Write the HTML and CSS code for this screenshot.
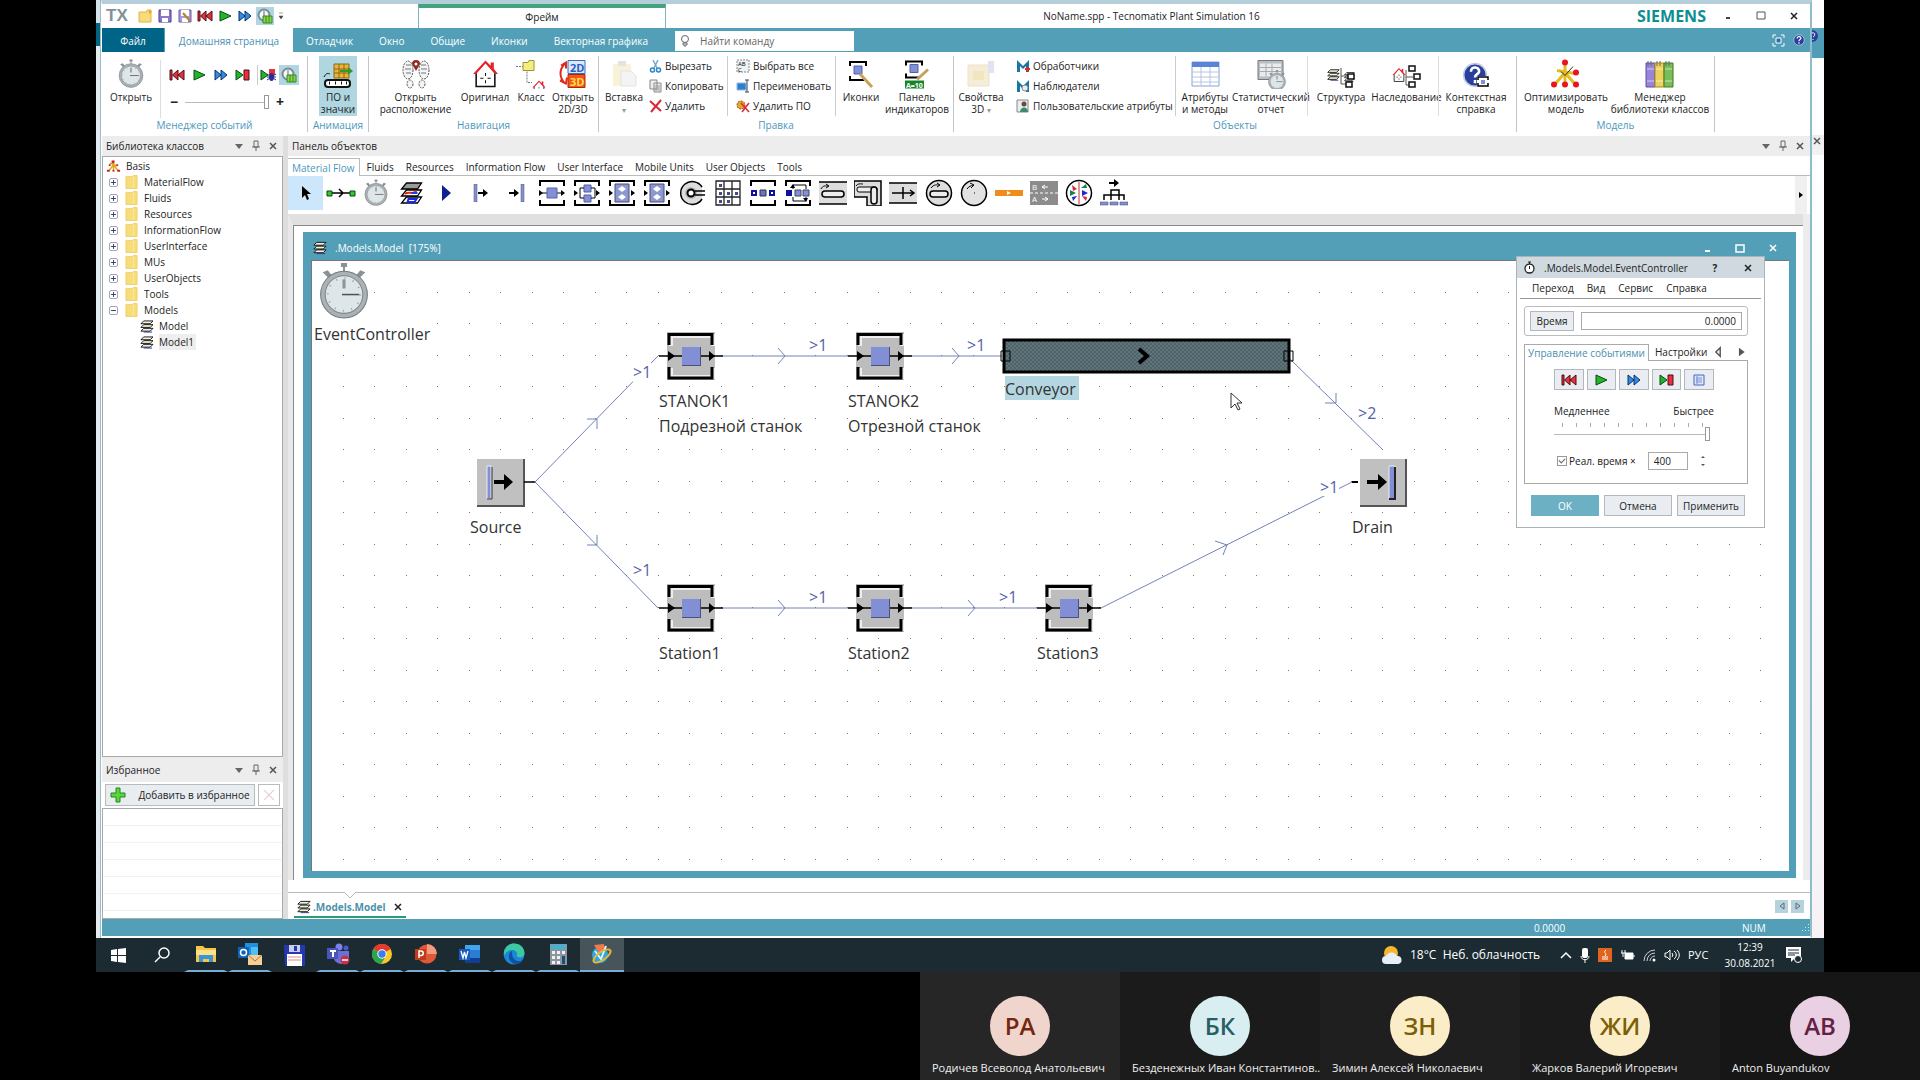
FILE: index.html
```html
<!DOCTYPE html>
<html lang="ru">
<head>
  <meta charset="UTF-8">
  <title>NoName.spp - Tecnomatix Plant Simulation 16</title>
  <link rel="stylesheet" href="styles.css">
</head>
<body>

  <!-- Shared icons -->
  <svg class="defs" width="0" height="0" aria-hidden="true">
    <defs>
      <symbol id="i-rewind" viewBox="0 0 16 12"><path d="M1 1h2v10H1zM9 1v10L3.500 6zM15 1v10L9 6z" fill="#e8303c" stroke="#4a1016"/></symbol>
      <symbol id="i-play" viewBox="0 0 16 12"><path d="M3 1l11 5L3 11z" fill="#22b52c" stroke="#0a4a12"/></symbol>
      <symbol id="i-fast" viewBox="0 0 16 12"><path d="M2 1l6 5-6 5zM8 1l6 5-6 5z" fill="#2f8de8" stroke="#0c2c66"/></symbol>
      <symbol id="i-step" viewBox="0 0 16 12"><path d="M1 1l7 5-7 5z" fill="#22b52c" stroke="#0a4a12"/><path d="M9 1h5v10H9z" fill="#e8303c" stroke="#4a1016"/></symbol>
      <symbol id="i-debug" viewBox="0 0 16 14"><path d="M1 2l7 5-7 5z" fill="#22b52c" stroke="#0a4a12"/><path d="M9 1h6v6H9z" fill="#e8303c"/><ellipse cx="11.500" cy="9" rx="2.500" ry="4" fill="#2b2f8f"/><path d="M7 6l9 6M16 6l-9 6M7 9h9" stroke="#2b2f8f"/></symbol>
      <symbol id="i-real" viewBox="0 0 16 16"><circle cx="7" cy="7" r="5.500" fill="#f4f8fa" stroke="#7d8a94" stroke-width="2"/><path d="M7 3v5" stroke="#667"/><path d="M6 8h9v7H6z" fill="#8fd44a" stroke="#2f8a1d"/><path d="M9 8v7M12 8v7" stroke="#2f8a1d"/></symbol>
      <symbol id="i-watch" viewBox="0 0 48 58">
        <path d="M21 1h6v4h-2v4h-2V5h-2z" fill="#8b9296"/><path d="M3 10l5-2 4 5-3 3zM45 10l-5-2-4 5 3 3z" fill="#8b9296"/>
        <circle cx="24" cy="32" r="23" fill="#aab2b6" stroke="#737a7e"/><circle cx="24" cy="32" r="18.500" fill="#dfe6e9" stroke="#7e868a"/>
        <circle cx="24" cy="32" r="16" fill="none" stroke="#9aa3a8" stroke-width="2" stroke-dasharray="1 7.380"/>
        <path d="M24 17v9" stroke="#8c9599" stroke-width="3"/><path d="M22 32h17" stroke="#4d5356" stroke-width="1.500"/>
      </symbol>
      <symbol id="i-frame" viewBox="0 0 24 24">
        <path d="M7 2h15l-4 6H2z" fill="#9a9a9a" stroke="#000" stroke-width="1.300"/>
        <path d="M7 9h15l-4 6H2z" fill="#fff" stroke="#000" stroke-width="1.300"/><path d="M5 13c5-3 8 1 12-3" fill="none" stroke="#e02a1e" stroke-width="2"/><path d="M12 12h6" stroke="#1e3ee0" stroke-width="2"/>
        <path d="M7 16h15l-4 6H2z" fill="#fff" stroke="#000" stroke-width="1.300"/><path d="M9 18h8l-2 3H8z" fill="none" stroke="#1c28e8" stroke-width="2"/>
      </symbol>
      <symbol id="i-layers" viewBox="0 0 16 14"><path d="M5 1h10l-3 3H2zM5 5h10l-3 3H2zM5 9h10l-3 3H2z" fill="#f4f1dc" stroke="#111"/><path d="M5 13h9" stroke="#30308f"/></symbol>
      <symbol id="i-brackets" viewBox="0 0 26 26"><path d="M1 6V1h24v5M1 20v5h24v-5" fill="none" stroke="#000" stroke-width="2"/></symbol>
      <symbol id="i-arrows" viewBox="0 0 26 26"><path d="M0 10l4 3-4 3zM22 10l4 3-4 3z"/></symbol>
      <symbol id="i-station" viewBox="0 0 26 26"><use href="#i-brackets"/><use href="#i-arrows"/><path d="M3 13h5M18 13h5" stroke="#000"/><path d="M8 8h10v10H8z" fill="#8290d6" stroke="#5560a8"/></symbol>
      <symbol id="i-bay" viewBox="0 0 26 26"><use href="#i-brackets"/><use href="#i-arrows"/><path d="M6 4h14v18H6z" fill="#8d97d0" stroke="#444c80"/><path d="M9 9l4-3v6zM17 9l-4-3v6zM9 17l4-3v6zM17 17l-4-3v6z" fill="#fff"/></symbol>
      <symbol id="i-house" viewBox="0 0 26 28"><path d="M4 13v13h18V13" fill="#fff" stroke="#111" stroke-width="1.500"/><path d="M18 3h3v6l4 5H22L13 4 4 14H1L13 1l5 5z" fill="#e8202a"/><path d="M13 13v3M13 20v3M8 18h3M15 18h3" stroke="#111"/></symbol>
      <symbol id="i-pin" viewBox="0 0 10 12"><path d="M3 1h4v6H3zM1 7h8M5 7v4" fill="none" stroke="#666"/></symbol>
      <symbol id="i-close" viewBox="0 0 10 10"><path d="M2 2l6 6M8 2L2 8" stroke="currentColor" stroke-width="1.500"/></symbol>
      <symbol id="i-caret" viewBox="0 0 10 10"><path d="M1 3h8L5 8z" fill="#666"/></symbol>
      <symbol id="i-m" viewBox="0 0 14 14"><path d="M1 13V1l6 6 6-6v12h-3V7l-3 3-3-3v6z" fill="#1477a8"/></symbol>
      <symbol id="i-help" viewBox="0 0 16 16"><circle cx="8" cy="8" r="7" fill="#2a3f9c" stroke="#c5cce4"/><path d="M5.500 6c0-4 5.500-3 5 0-.3 1.600-2.500 1.500-2.500 3.500M8 11v2" fill="none" stroke="#fff" stroke-width="1.600"/></symbol>
      <symbol id="i-tree" viewBox="0 0 16 14"><path d="M8 1v5L3 12M8 6l5 6M8 6v6M4 4l8 3" fill="none" stroke="#d9a51c" stroke-width="1.500"/><path d="M6 1h3v3H6zM1 11h3v2H1zM12 11h3v2h-3zM7 11h2v2H7zM3 5h2v2H3zM11 5h2v2h-2z" fill="#c8281e"/></symbol>
      <symbol id="i-folder" viewBox="0 0 14 16"><path d="M1 2h8v-1h4v14H1z" fill="#f7dc7a" stroke="#f0cf68"/><path d="M9 2v13" stroke="#fbe9a6"/></symbol>

      <!-- Diagram parts, origin in the middle -->
      <g id="n-station">
        <path d="M-24-24h48v48h-48z" fill="#bdbdbd"/>
        <path d="M-20-10v-10h42v10M-20 12v9h42v-9" fill="none" stroke="#eee" stroke-width="4"/>
        <path d="M-22-11v-10.500h43V-11M-22 11v11h43V11" fill="none" stroke="#000" stroke-width="3"/>
        <path d="M-32 0h50M8 0h24" stroke="#000" stroke-width="1.500"/>
        <path d="M-23-5l7 5-7 5zM18-5l6 5-6 5z"/>
        <path d="M-9-9h19v19H-9z" fill="#4a5280"/><path d="M-9-9h18V9H-9z" fill="#828fd4"/>
      </g>
      <pattern id="dots" width="63" height="63" patternUnits="userSpaceOnUse" x="0" y="0">
        <path d="M31 31h1v1h-1zM62 31h1v1h-1zM31 62h1v1h-1zM62 62h1v1h-1z" fill="#777"/>
      </pattern>
      <pattern id="mesh" width="4" height="4" patternUnits="userSpaceOnUse"><path d="M0 0h4v4H0z" fill="#5f757b"/><path d="M0 0h2v2H0zM2 2h2v2H2z" fill="#4e6268"/></pattern>
    </defs>
  </svg>

  <div class="screen">
    <div class="behind-left"></div>

    <div class="app">
      <!-- Title bar -->
      <header class="titlebar">
        <div class="quick">
          <b class="tx">TX</b>
          <button aria-label="Создать"><svg width="15" height="14" viewBox="0 0 15 14"><path d="M1 3h8V1h4v12H1z" fill="#f7dc7a" stroke="#dcb448"/><path d="M11 1l3 2-3 2" fill="#f0a020"/></svg></button>
          <button aria-label="Сохранить"><svg width="14" height="14" viewBox="0 0 14 14"><path d="M1 1h12v12H1z" fill="#8a78c8" stroke="#4c3d94"/><path d="M3 1h8v6H3zM4 9h6v4H4z" fill="#fff"/></svg></button>
          <button aria-label="Сохранить как"><svg width="14" height="14" viewBox="0 0 14 14"><path d="M1 1h12v12H1z" fill="#a89cd4" stroke="#6a5ea8"/><path d="M3 1h8v6H3zM4 9h6v4H4z" fill="#fff"/><path d="M5 4l7 8" stroke="#b8842c" stroke-width="2"/></svg></button>
          <button aria-label="Сброс"><svg width="16" height="12"><use href="#i-rewind"/></svg></button>
          <button aria-label="Старт"><svg width="16" height="12"><use href="#i-play"/></svg></button>
          <button aria-label="Быстро"><svg width="16" height="12"><use href="#i-fast"/></svg></button>
          <button class="on" aria-label="Реальное время"><svg width="16" height="16"><use href="#i-real"/></svg></button>
          <svg class="quick-more" width="6" height="8" viewBox="0 0 6 8"><path d="M1 1h4M1 4h4L3 7z" fill="#444" stroke="#444" stroke-width=".5"/></svg>
        </div>
        <div class="context-tab">Фрейм</div>
        <div class="window-title">NoName.spp - Tecnomatix Plant Simulation 16</div>
        <b class="siemens">SIEMENS</b>
        <div class="window-buttons">
          <button aria-label="Свернуть"><svg width="10" height="10"><path d="M3 7h4" stroke="#444" stroke-width="2"/></svg></button>
          <button aria-label="Развернуть"><svg width="10" height="10"><path d="M1 1h8v7H1z" fill="none" stroke="#555"/></svg></button>
          <button aria-label="Закрыть"><svg width="10" height="10"><use href="#i-close"/></svg></button>
        </div>
      </header>

      <!-- Ribbon tabs -->
      <nav class="tabs">
        <button class="file">Файл</button>
        <button class="active">Домашняя страница</button>
        <button>Отладчик</button>
        <button>Окно</button>
        <button>Общие</button>
        <button>Иконки</button>
        <button>Векторная графика</button>
        <label class="search">
          <svg width="10" height="14" viewBox="0 0 10 14"><circle cx="5" cy="5" r="3.500" fill="none" stroke="#666"/><path d="M3 9h4v2H3zM4 12h2" fill="none" stroke="#666"/></svg>
          <input type="text" placeholder="Найти команду" aria-label="Найти команду">
        </label>
        <div class="tabs-right">
          <button aria-label="Полный экран"><svg width="13" height="13" viewBox="0 0 13 13"><path d="M1 4V1h3M9 1h3v3M12 9v3H9M4 12H1V9" fill="none" stroke="#fff"/><path d="M4 4h5v5H4z" fill="#2c6db0" stroke="#fff"/></svg></button>
          <button aria-label="Справка"><svg width="12" height="14" viewBox="0 0 16 16"><use href="#i-help"/></svg></button>
        </div>
      </nav>

      <!-- Ribbon -->
      <div class="ribbon">
        <section class="group events">
          <div class="tools">
            <button class="big"><svg width="26" height="30"><use href="#i-watch"/></svg><span>Открыть</span></button>
            <div class="controller">
              <div class="row">
                <button aria-label="Сброс"><svg width="16" height="12"><use href="#i-rewind"/></svg></button>
                <button aria-label="Старт"><svg width="16" height="12"><use href="#i-play"/></svg></button>
                <button aria-label="Быстро"><svg width="16" height="12"><use href="#i-fast"/></svg></button>
                <button aria-label="Шаг"><svg width="16" height="12"><use href="#i-step"/></svg></button>
                <button class="bug" aria-label="Отладка"><svg width="16" height="14"><use href="#i-debug"/></svg></button>
                <button class="on" aria-label="Реальное время"><svg width="16" height="16"><use href="#i-real"/></svg></button>
              </div>
              <div class="row speed">
                <b>−</b><input type="range" min="0" max="100" value="100" aria-label="Скорость"><b>+</b>
              </div>
            </div>
          </div>
          <h3>Менеджер событий</h3>
        </section>

        <section class="group animation">
          <div class="tools">
            <button class="big on">
              <svg width="30" height="28" viewBox="0 0 30 28"><path d="M11 4h15v14H11z" fill="#eab33c" stroke="#8a6a12"/><path d="M11 9h15M11 13h15M16 4v14M21 4v14" stroke="#8a6a12"/><path d="M17 10h8V7l5 4-5 4v-3h-8z" fill="#2f9a2a"/><rect x="2" y="20" width="25" height="7" rx="3" fill="#fff" stroke="#111" stroke-width="2"/><path d="M1 17c2-4 4-4 6-3" fill="none" stroke="#111"/><path d="M6 23h1M12 23h1M18 23h1M23 23h1" stroke="#111" stroke-width="3"/></svg>
              <span>ПО и<br>значки</span>
            </button>
          </div>
          <h3>Анимация</h3>
        </section>

        <section class="group navigation">
          <div class="tools">
            <button class="big">
              <svg width="28" height="30" viewBox="0 0 28 30"><g fill="#f4f4f4" stroke="#555" stroke-dasharray="2 1"><ellipse cx="6" cy="11" rx="5" ry="9"/><ellipse cx="22" cy="11" rx="5" ry="9"/><ellipse cx="8" cy="25" rx="3" ry="4"/><ellipse cx="20" cy="25" rx="3" ry="4"/></g><path d="M4 6h5M3 10h6M4 14h5M19 6h5M19 10h6M19 14h5" stroke="#777"/><path d="M14 12l-4-7a4 4 0 1 1 8 0z" fill="#8d2a1c"/><circle cx="14" cy="5" r="1.500" fill="#fff"/></svg>
              <span>Открыть<br>расположение</span>
            </button>
            <button class="big"><svg width="27" height="29"><use href="#i-house"/></svg><span>Оригинал</span></button>
            <button class="big"><svg width="30" height="29" viewBox="0 0 30 29"><path d="M0 7h7M11 12v11h5" fill="none" stroke="#777" stroke-dasharray="2 1"/><path d="M7 3h5l1-2h5v10H7z" fill="#f4ee7c" stroke="#9a9440"/><svg x="16" y="13" width="14" height="15"><use href="#i-house"/></svg></svg><span>Класс</span></button>
            <button class="big"><svg width="28" height="29" viewBox="0 0 28 29"><path d="M9 1h17v13H9z" fill="#dbe8fa" stroke="#3a6cc0"/><path d="M9 15h17v13H9z" fill="#f4561e" stroke="#a82c0c"/><text x="11" y="12" font-size="11" font-weight="bold" fill="#2a5fc4">2D</text><text x="11" y="26" font-size="11" font-weight="bold" fill="#ffe14a">3D</text><path d="M6 4c-6 6-6 14 0 20M2 6l5-3 0 6M1 21l6 3 1-6" fill="none" stroke="#e02a1e" stroke-width="2"/></svg><span>Открыть<br>2D/3D</span></button>
          </div>
          <h3>Навигация</h3>
        </section>

        <section class="group edit">
          <div class="tools">
            <button class="big off"><svg width="26" height="28" viewBox="0 0 26 28"><path d="M2 4h18v22H2z" fill="#f6efcf"/><path d="M7 1h8v5H7z" fill="#ddd"/><path d="M10 11h10l5 5v10H10z" fill="#f2f2f2" stroke="#ddd"/></svg><span>Вставка<br><small>▾</small></span></button>
            <div class="list">
              <button><svg width="13" height="14" viewBox="0 0 13 14"><path d="M4 1l4 8M9 1L5 9" stroke="#7aa5c8" stroke-width="1.500"/><circle cx="3.500" cy="11" r="2" fill="none" stroke="#2a86c4" stroke-width="1.500"/><circle cx="9.500" cy="11" r="2" fill="none" stroke="#2a86c4" stroke-width="1.500"/></svg>Вырезать</button>
              <button><svg width="13" height="14" viewBox="0 0 13 14"><path d="M1 1h7v9H1zM5 4h7v9H5z" fill="#eee" stroke="#888"/><path d="M6 7h5M6 9h5M6 11h5" stroke="#999"/></svg>Копировать</button>
              <button><svg width="13" height="14" viewBox="0 0 13 14"><path d="M1 2l11 10M12 1L2 13" stroke="#d8283a" stroke-width="2"/></svg>Удалить</button>
            </div>
            <div class="list split">
              <button><svg width="14" height="14" viewBox="0 0 14 14"><path d="M1 1h12v12H1z" fill="#eef3f6" stroke="#888" stroke-dasharray="2 1"/><text x="2" y="7" font-size="6">AB</text><text x="2" y="13" font-size="6">C</text></svg>Выбрать все</button>
              <button><svg width="14" height="14" viewBox="0 0 14 14"><path d="M1 4h9v7H1z" fill="#2a7fd4" stroke="#9ab8d8"/><path d="M9 1h4M11 1v12M9 13h4" stroke="#345"/></svg>Переименовать</button>
              <button><svg width="14" height="14" viewBox="0 0 14 14"><circle cx="5" cy="6" r="4" fill="#e8a42c" stroke="#8a5a10" stroke-dasharray="2 1"/><path d="M5 4l8 9M13 4l-7 9" stroke="#d8283a" stroke-width="1.500"/></svg>Удалить ПО</button>
            </div>
            <button class="big"><svg width="26" height="28" viewBox="0 0 26 28"><path d="M2 6V2h16v4M2 16v4h14" fill="none" stroke="#000" stroke-width="2"/><path d="M6 6h8v8H6z" fill="#8290d6" stroke="#5560a8"/><path d="M12 14l12 13" stroke="#c8a05a" stroke-width="3"/></svg><span>Иконки</span></button>
            <button class="big"><svg width="26" height="29" viewBox="0 0 26 29"><path d="M2 6V2h16v4M2 14v4h14" fill="none" stroke="#000" stroke-width="2"/><path d="M6 5h8v8H6z" fill="#8290d6" stroke="#5560a8"/><path d="M24 10L13 20" stroke="#c8a05a" stroke-width="3"/><path d="M1 21h19v8H1z" fill="#17842a"/><text x="2" y="28" font-size="7" font-weight="bold" fill="#fff">A=10</text></svg><span>Панель<br>индикаторов</span></button>
          </div>
          <h3>Правка</h3>
        </section>

        <section class="group objects">
          <div class="tools">
            <button class="big off"><svg width="30" height="28" viewBox="0 0 30 28"><path d="M2 5h21v21H2z" fill="#f4e9d0" stroke="#eadcb8"/><path d="M7 11h11v9H7z" fill="#eee0b0"/><path d="M22 1h6v12h-6z" fill="#dcdcf0"/></svg><span>Свойства<br>3D <small>▾</small></span></button>
            <div class="list split">
              <button><svg width="14" height="14" viewBox="0 0 14 14"><use href="#i-m"/><path d="M9 10h5M11.500 8v5" stroke="#e02a1e" stroke-width="2"/></svg>Обработчики</button>
              <button><svg width="14" height="14" viewBox="0 0 14 14"><use href="#i-m"/><circle cx="9" cy="9" r="3" fill="#e4ecf2" stroke="#888"/></svg>Наблюдатели</button>
              <button><svg width="14" height="14" viewBox="0 0 14 14"><path d="M1 1h11v12H1z" fill="#e6eef0" stroke="#888"/><circle cx="8" cy="5" r="2.500" fill="#6a4a38"/><path d="M4 13c0-6 8-6 8 0z" fill="#3f8a6a"/></svg>Пользовательские атрибуты</button>
            </div>
            <button class="big"><svg width="29" height="26" viewBox="0 0 29 26"><path d="M1 1h27v24H1z" fill="#fff" stroke="#8aa2d0"/><path d="M1 1h27v5H1z" fill="#5b84d8"/><path d="M1 11h27M1 16h27M1 21h27M10 6v19M19 6v19" stroke="#b4c4e8"/></svg><span>Атрибуты<br>и методы</span></button>
            <button class="big"><svg width="29" height="29" viewBox="0 0 29 29"><path d="M1 1h25v19H1z" fill="#b8bec4" stroke="#777"/><path d="M3 4h21v13H3z" fill="#e8ecee"/><path d="M3 8h21M3 12h21M9 4v13M15 4v13" stroke="#aaa"/><svg x="11" y="6" width="18" height="22"><use href="#i-watch"/></svg></svg><span>Статистический<br>отчет</span></button>
            <button class="big rule"><svg width="30" height="28" viewBox="0 0 30 28"><svg x="0" y="0" width="14" height="13"><use href="#i-layers"/></svg><svg x="17" y="2" width="12" height="11"><use href="#i-layers"/></svg><path d="M15 8v16h5M15 16h7" fill="none" stroke="#555"/><path d="M22 14h6v5h-6zM20 22h6v5h-6z" fill="#fff" stroke="#111" stroke-width="1.500"/></svg><span>Структура</span></button>
            <button class="big"><svg width="30" height="28" viewBox="0 0 30 28"><svg x="0" y="0" width="14" height="15"><use href="#i-house"/></svg><path d="M14 10v15h4M14 17h7" fill="none" stroke="#555"/><path d="M17 6h6v5h-6zM22 14h6v5h-6zM17 22h6v5h-6z" fill="#fff" stroke="#111" stroke-width="1.500"/></svg><span>Наследование</span></button>
            <button class="big rule"><svg width="28" height="28" viewBox="0 0 28 28"><svg x="0" y="0" width="26" height="26"><use href="#i-help"/></svg><path d="M15 16h12v11H15z" fill="#fff"/><path d="M16 20v-3h10v3M16 23v3h10v-3" fill="none" stroke="#000" stroke-width="1.500"/><path d="M19 20h4v4h-4z" fill="#8290d6"/></svg><span>Контекстная<br>справка</span></button>
          </div>
          <h3>Объекты</h3>
        </section>

        <section class="group model">
          <div class="tools">
            <button class="big"><svg width="30" height="29" viewBox="0 0 30 29"><path d="M14 3v10L3 26M14 13l11 13M14 13v13M6 11l18 3" fill="none" stroke="#e4bc1e" stroke-width="3"/><path d="M22 7l-8 9-4-4" fill="none" stroke="#333"/><g fill="#e8141e"><circle cx="14" cy="3" r="3"/><circle cx="25" cy="13" r="3"/><circle cx="3" cy="25" r="3"/><circle cx="14" cy="25" r="3"/><circle cx="25" cy="25" r="3"/></g></svg><span>Оптимизировать<br>модель</span></button>
            <button class="big"><svg width="30" height="28" viewBox="0 0 30 28"><path d="M1 3h9v24H1z" fill="#9a84d8" stroke="#5f4ca8"/><path d="M10 3h9v24h-9z" fill="#ecd25a" stroke="#a88c1c"/><path d="M19 3h9v24h-9z" fill="#7cbc58" stroke="#3f7c24"/><path d="M3 1v5M6 1v5M12 1v5M15 1v5M21 1v5M24 1v5" stroke="#666"/><path d="M2 9h7M11 9h7M20 9h7M2 21h7M11 21h7M20 21h7" stroke="#fff" stroke-opacity=".6"/></svg><span>Менеджер<br>библиотеки классов</span></button>
          </div>
          <h3>Модель</h3>
        </section>
      </div>

      <div class="workspace">
        <!-- Class library and favourites -->
        <aside class="side">
          <div class="caption">Библиотека классов
            <span class="caption-icons"><svg width="10" height="10"><use href="#i-caret"/></svg><svg width="10" height="12"><use href="#i-pin"/></svg><svg width="10" height="10"><use href="#i-close"/></svg></span>
          </div>
          <ul class="tree">
            <li class="root"><svg width="15" height="14"><use href="#i-tree"/></svg>Basis</li>
            <li><i class="plus"></i><svg width="13" height="16"><use href="#i-folder"/></svg>MaterialFlow</li>
            <li><i class="plus"></i><svg width="13" height="16"><use href="#i-folder"/></svg>Fluids</li>
            <li><i class="plus"></i><svg width="13" height="16"><use href="#i-folder"/></svg>Resources</li>
            <li><i class="plus"></i><svg width="13" height="16"><use href="#i-folder"/></svg>InformationFlow</li>
            <li><i class="plus"></i><svg width="13" height="16"><use href="#i-folder"/></svg>UserInterface</li>
            <li><i class="plus"></i><svg width="13" height="16"><use href="#i-folder"/></svg>MUs</li>
            <li><i class="plus"></i><svg width="13" height="16"><use href="#i-folder"/></svg>UserObjects</li>
            <li><i class="plus"></i><svg width="13" height="16"><use href="#i-folder"/></svg>Tools</li>
            <li><i class="plus minus"></i><svg width="13" height="16"><use href="#i-folder"/></svg>Models</li>
            <li class="leaf"><svg width="15" height="13"><use href="#i-layers"/></svg>Model</li>
            <li class="leaf"><svg width="15" height="13"><use href="#i-layers"/></svg><span class="selected">Model1</span></li>
          </ul>
          <div class="caption">Избранное
            <span class="caption-icons"><svg width="10" height="10"><use href="#i-caret"/></svg><svg width="10" height="12"><use href="#i-pin"/></svg><svg width="10" height="10"><use href="#i-close"/></svg></span>
          </div>
          <div class="fav-bar">
            <button class="add"><svg width="16" height="16" viewBox="0 0 16 16"><path d="M6 1h4v5h5v4h-5v5H6v-5H1V6h5z" fill="#5fd43a" stroke="#1d8a1a"/></svg>Добавить в избранное</button>
            <button class="remove" aria-label="Удалить из избранного"><svg width="12" height="12" viewBox="0 0 10 10"><path d="M1 1l8 8M9 1L1 9" stroke="#e8cccc"/></svg></button>
          </div>
          <div class="fav-list"></div>
        </aside>

        <main class="content">
          <div class="caption">Панель объектов
            <span class="caption-icons"><svg width="10" height="10"><use href="#i-caret"/></svg><svg width="10" height="12"><use href="#i-pin"/></svg><svg width="10" height="10"><use href="#i-close"/></svg></span>
          </div>
          <div class="toolbox-tabs">
            <button class="active">Material Flow</button>
            <button>Fluids</button>
            <button>Resources</button>
            <button>Information Flow</button>
            <button>User Interface</button>
            <button>Mobile Units</button>
            <button>User Objects</button>
            <button>Tools</button>
          </div>
          <div class="toolbox">
            <div class="toolbox-items">
              <button class="on" aria-label="Выбор"><svg width="10" height="16" viewBox="0 0 10 16"><path d="M1 1v12l3-3 2 5 2-1-2-5h4z"/></svg></button>
              <button aria-label="Connector"><svg width="30" height="10" viewBox="0 0 30 10"><path d="M5 5h20M13 1l4 4-4 4" fill="none" stroke="#000" stroke-width="1.500"/><path d="M1 3h5v5H1zM24 3h5v5h-5z" fill="#35c435" stroke="#074a07"/></svg></button>
              <button aria-label="EventController"><svg width="24" height="28"><use href="#i-watch"/></svg></button>
              <button aria-label="Frame"><svg width="25" height="24"><use href="#i-frame"/></svg></button>
              <button aria-label="Interface"><svg width="10" height="16"><path d="M1 0l9 8-9 8z" fill="#10208f"/></svg></button>
              <button aria-label="Source"><svg width="16" height="18"><path d="M1 0h3v18H1z" fill="#8290d6" stroke="#556" stroke-width=".5"/><path d="M5 9h6" stroke="#000" stroke-width="2"/><path d="M10 5l5 4-5 4z"/></svg></button>
              <button aria-label="Drain"><svg width="16" height="18"><path d="M12 0h3v18h-3z" fill="#8290d6" stroke="#556" stroke-width=".5"/><path d="M0 9h6" stroke="#000" stroke-width="2"/><path d="M5 5l5 4-5 4z"/></svg></button>
              <button aria-label="Station"><svg width="26" height="26"><use href="#i-station"/></svg></button>
              <button aria-label="ParallelStation"><svg width="26" height="26" viewBox="0 0 26 26"><use href="#i-brackets"/><use href="#i-arrows"/><path d="M10 5h7v7h-7zM10 15h7v7h-7z" fill="#8290d6" stroke="#5560a8"/><path d="M10 8H6v10h4M17 8h4v10h-4" fill="none" stroke="#000"/></svg></button>
              <button aria-label="AssemblyStation"><svg width="26" height="26"><use href="#i-bay"/></svg></button>
              <button aria-label="DismantleStation"><svg width="26" height="26"><use href="#i-bay"/></svg></button>
              <button aria-label="PickAndPlace"><svg width="28" height="26" viewBox="0 0 28 26"><path d="M24 7A11.500 11.500 0 1 0 24 19" fill="#ddd" stroke="#000" stroke-width="1.500"/><circle cx="13" cy="13" r="6" fill="#bbb"/><circle cx="13" cy="13" r="3.500" fill="#fff" stroke="#000" stroke-width="2"/><path d="M17 11h10M17 15h10" stroke="#000" stroke-width="1.500"/></svg></button>
              <button aria-label="Store"><svg width="26" height="26" viewBox="0 0 26 26"><path d="M1 1h24v24H1zM9 1v24M17 1v24M1 9h24M1 17h24" fill="#fff" stroke="#222" stroke-width="1.300"/><path d="M4 4h3v3H4zM4 12h3v3H4zM12 12h3v3h-3zM20 12h3v3h-3zM4 20h3v3H4zM12 20h3v3h-3z" fill="#44498c"/></svg></button>
              <button aria-label="Buffer"><svg width="26" height="26" viewBox="0 0 26 26"><use href="#i-brackets"/><path d="M1 10h6v6H1zM19 10h6v6h-6z" fill="#0d12a0"/><path d="M10 10h6v6h-6z" fill="#6a74c0" stroke="#334"/><path d="M3 13h2M21 13h2" stroke="#fff" stroke-width="2"/></svg></button>
              <button aria-label="Sorter"><svg width="26" height="26" viewBox="0 0 26 26"><use href="#i-brackets"/><path d="M1 10h6v6H1z" fill="#0d12a0"/><path d="M10 10h6v6h-6zM18 10h6v6h-6z" fill="#8290d6" stroke="#446"/><path d="M8 9V5h13v4M8 17v4h13v-4" fill="none" stroke="#000"/><path d="M5 8h5L8 4zM18 18h5l-2 4z"/></svg></button>
              <button aria-label="Conveyor"><svg width="28" height="26" viewBox="0 0 28 26"><path d="M0 2h28v22H0z" fill="#ddd"/><path d="M0 2h28M0 24h28" stroke="#000" stroke-width="1.500"/><rect x="3" y="11" width="22" height="6" rx="3" fill="#eee" stroke="#000" stroke-width="1.500"/><path d="M2 9c2-4 5-3 7-3M7 4l3 2-3 2" fill="none" stroke="#000"/></svg></button>
              <button aria-label="AngularConverter"><svg width="28" height="26" viewBox="0 0 28 26"><path d="M0 1h27v25H13V17H0z" fill="#ddd" stroke="#000" stroke-width="1.500"/><rect x="3" y="7" width="20" height="5" rx="2" fill="#eee" stroke="#000"/><rect x="17" y="7" width="6" height="17" rx="3" fill="#eee" stroke="#000" stroke-width="1.500"/><path d="M2 6c2-3 5-2 7-2" fill="none" stroke="#000"/></svg></button>
              <button aria-label="Track"><svg width="28" height="26" viewBox="0 0 28 26"><path d="M0 3h28v20H0z" fill="#ddd"/><path d="M0 3h28M0 23h28M3 13h21M14 7v12M21 10l4 3-4 3" fill="none" stroke="#000" stroke-width="1.500"/></svg></button>
              <button aria-label="Turntable"><svg width="28" height="28" viewBox="0 0 28 28"><circle cx="14" cy="14" r="12.500" fill="#ddd" stroke="#000" stroke-width="1.500"/><rect x="5" y="12" width="18" height="6" rx="3" fill="#eee" stroke="#000" stroke-width="1.500"/><path d="M6 9c3-4 6-3 8-3M12 4l3 2-3 2" fill="none" stroke="#000"/></svg></button>
              <button aria-label="Turnplate"><svg width="28" height="28" viewBox="0 0 28 28"><circle cx="14" cy="14" r="12.500" fill="#e2e2e2" stroke="#000" stroke-width="1.500"/><path d="M7 10c2-3 4-3 6-4M10 4l4 2-3 3M14 14h1" fill="none" stroke="#000"/></svg></button>
              <button aria-label="TwoLaneTrack"><svg width="28" height="8"><path d="M0 1h28v6H0z" fill="#f08c1a"/><path d="M12 2l4 2-4 2z" fill="#fff"/></svg></button>
              <button aria-label="Lane"><svg width="28" height="26"><path d="M0 1h28v24H0z" fill="#8c8c8c"/><path d="M0 13h28" stroke="#fff" stroke-dasharray="3 2"/><path d="M12 7h6M15 5l-3 2 3 2M12 19h6M15 17l3 2-3 2" fill="none" stroke="#fff"/><text x="2" y="10" font-size="8" fill="#fff">B</text><text x="2" y="22" font-size="8" fill="#fff">A</text></svg></button>
              <button aria-label="FlowControl"><svg width="28" height="28" viewBox="0 0 28 28"><circle cx="14" cy="14" r="12.500" fill="#fff" stroke="#000" stroke-width="1.500"/><path d="M14 3v22" stroke="#c03030"/><path d="M7 6l5 4-4 2zM21 22l-4-5 5 1z" fill="#d8283a"/><path d="M5 11l6 3-6 3zM16 9l5-4 1 4z" fill="#18804a"/><path d="M17 11l6 3-6 3zM8 22l4-5-5 1z" fill="#1c28d8"/></svg></button>
              <button aria-label="Cycle"><svg width="28" height="28" viewBox="0 0 28 28"><path d="M9 4h6" stroke="#000" stroke-width="2"/><path d="M14 0l5 4-5 4z"/><path d="M4 21v-5h20v5M11 21V11h8v10" fill="none" stroke="#000" stroke-width="1.500"/><path d="M0 23h8v3H0zM10 23h8v3h-8zM20 23h8v3h-8z" fill="#8290d6" stroke="#446" stroke-width=".5"/></svg></button>
            </div>
            <button class="more" aria-label="Ещё"><svg width="4" height="6"><path d="M0 0l4 3-4 3z"/></svg></button>
          </div>

          <div class="mdi">
            <div class="frame-window">
              <div class="frame-title">
                <svg width="15" height="14"><use href="#i-layers"/></svg>
                <span>.Models.Model&nbsp; [175%]</span>
                <div class="frame-buttons">
                  <button aria-label="Свернуть"><svg width="10" height="10"><path d="M3 8h5" stroke="#fff" stroke-width="2"/></svg></button>
                  <button aria-label="Развернуть"><svg width="10" height="10"><path d="M1 2h8v7H1z" fill="none" stroke="#fff" stroke-width="1.500"/></svg></button>
                  <button aria-label="Закрыть"><svg width="10" height="10"><use href="#i-close"/></svg></button>
                </div>
              </div>
              <div class="canvas">
                <svg class="diagram" width="100%" height="100%">
                  <rect x="1" y="1" width="1464" height="600" fill="url(#dots)"/>
                  <path d="M0 1h60v60H0zM0 60h124v24H0z" fill="#fff"/>

                  <!-- Connections -->
                  <g class="wire">
                    <path d="M223 221L346 95M223 221L346 347M411 95h125M600 95h90M978 98L1071 189M411 347h125M600 347h125M789 347L1040 221"/>
                    <path d="M275 158h10v10M275 284h10v-10M466 87l7 8-7 8M640 87l7 8-7 8M466 339l7 8-7 8M656 339l7 8-7 8M1013 142h11v-10M903 280l12 4-4 10"/>
                  </g>
                  <path d="M321 101h18v21h-18zM1007 215h20v20h-20z" fill="#fff"/>
                  <g class="wire-label">
                    <text x="321" y="117">&gt;1</text>
                    <text x="321" y="315">&gt;1</text>
                    <text x="497" y="90">&gt;1</text>
                    <text x="655" y="90">&gt;1</text>
                    <text x="497" y="342">&gt;1</text>
                    <text x="687" y="342">&gt;1</text>
                    <text x="1008" y="232">&gt;1</text>
                    <text x="1046" y="158">&gt;2</text>
                  </g>

                  <!-- Objects -->
                  <svg x="7" y="1" width="50" height="59"><use href="#i-watch"/></svg>
                  <use href="#n-station" x="379" y="95"/>
                  <use href="#n-station" x="568" y="95"/>
                  <use href="#n-station" x="379" y="347"/>
                  <use href="#n-station" x="568" y="347"/>
                  <use href="#n-station" x="757" y="347"/>
                  <g>
                    <path d="M165 198h48v48h-48z" fill="#555"/><path d="M165 198h46v46h-46z" fill="#c0c0c0"/>
                    <path d="M175 205h4v33h-4z" fill="#828fd4" stroke="#eee"/><path d="M180 206v32h-5" fill="none" stroke="#333"/>
                    <path d="M182 219h10v-6l9 8-9 8v-6h-10z"/><path d="M212 221h11" stroke="#000" stroke-width="1.500"/>
                  </g>
                  <g>
                    <path d="M1048 198h47v48h-47z" fill="#555"/><path d="M1048 198h45v46h-45z" fill="#c0c0c0"/>
                    <path d="M1077 205h6v33h-6z" fill="#828fd4" stroke="#eee"/><path d="M1083 206v32h-6" fill="none" stroke="#222" stroke-width="2"/>
                    <path d="M1055 219h11v-6l9 8-9 8v-6h-11z"/><path d="M1040 221h6" stroke="#000" stroke-width="2"/>
                  </g>
                  <path d="M692 79h285v32H692z" fill="url(#mesh)" stroke="#000" stroke-width="3"/>
                  <path d="M827 88l8 7-8 7" fill="none" stroke="#000" stroke-width="4"/>
                  <path d="M689 90h9v10h-9zM972 90h9v10h-9z" fill="none" stroke="#000"/>
                  <path d="M693 115h74v24h-74z" fill="#b3d6e0"/>

                  <g class="name">
                    <text x="2" y="79">EventController</text>
                    <text x="158" y="272">Source</text>
                    <text x="347" y="146">STANOK1</text>
                    <text x="347" y="171">Подрезной станок</text>
                    <text x="536" y="146">STANOK2</text>
                    <text x="536" y="171">Отрезной станок</text>
                    <text x="693" y="134">Conveyor</text>
                    <text x="347" y="398">Station1</text>
                    <text x="536" y="398">Station2</text>
                    <text x="725" y="398">Station3</text>
                    <text x="1040" y="272">Drain</text>
                  </g>
                  <path d="M919 132v15l4-4 3 6 2-1-3-6h5z" fill="#fff" stroke="#333"/>
                </svg>
              </div>

              <!-- Event controller dialog -->
              <form class="dialog" onsubmit="return false;">
                <div class="dialog-title">
                  <svg width="11" height="13" viewBox="0 0 11 13"><circle cx="5.500" cy="7.500" r="4.500" fill="#fff" stroke="#222" stroke-width="1.300"/><path d="M4 1h3M5.500 1v2M5.500 5v3" stroke="#222"/></svg>
                  <span>.Models.Model.EventController</span>
                  <button type="button">?</button>
                  <button type="button" aria-label="Закрыть"><svg width="10" height="10"><use href="#i-close"/></svg></button>
                </div>
                <div class="dialog-menu">
                  <a href="#">Переход</a><a href="#">Вид</a><a href="#">Сервис</a><a href="#">Справка</a>
                </div>
                <div class="time">
                  <button type="button">Время</button>
                  <input type="text" value="0.0000" aria-label="Время">
                </div>
                <div class="dialog-tabs">
                  <button type="button" class="active">Управление событиями</button>
                  <button type="button">Настройки</button>
                  <svg width="24" height="8" viewBox="0 0 24 8"><path d="M5 1v6L2 4z" fill="#fff" stroke="#555"/><path d="M18 1v6l4-3z" fill="#555"/></svg>
                </div>
                <div class="dialog-panel">
                  <div class="run">
                    <button type="button" aria-label="Сброс"><svg width="16" height="12"><use href="#i-rewind"/></svg></button>
                    <button type="button" aria-label="Старт"><svg width="16" height="12"><use href="#i-play"/></svg></button>
                    <button type="button" aria-label="Быстро"><svg width="16" height="12"><use href="#i-fast"/></svg></button>
                    <button type="button" aria-label="Шаг"><svg width="16" height="12"><use href="#i-step"/></svg></button>
                    <button type="button" aria-label="Список"><svg width="12" height="12"><path d="M1 1h10v10H1z" fill="#dfe6fa" stroke="#4864c0"/><path d="M3 4h6M3 6h6M3 8h6M4 2v8" stroke="#7c92d8"/></svg></button>
                  </div>
                  <div class="ends"><span>Медленнее</span><span>Быстрее</span></div>
                  <div class="ticks"></div>
                  <input type="range" min="0" max="10" value="10" aria-label="Скорость">
                  <div class="real">
                    <label><input type="checkbox" checked>Реал. время ×</label>
                    <input type="text" value="400" aria-label="Множитель">
                    <svg width="6" height="12"><path d="M1 3l2-2 2 2zM1 9l2 2 2-2z" fill="#555"/></svg>
                  </div>
                </div>
                <div class="dialog-actions">
                  <button type="button" class="primary">OK</button>
                  <button type="button">Отмена</button>
                  <button type="button">Применить</button>
                </div>
              </form>
            </div>
          </div>

          <div class="doc-tabs">
            <svg class="notch" width="12" height="7"><path d="M0 0h12L6 6z" fill="#fff"/><path d="M0 0l6 6 6-6" fill="none" stroke="#bbb"/></svg>
            <div class="doc-tab">
              <svg width="15" height="14"><use href="#i-layers"/></svg><b>.Models.Model</b>
              <button aria-label="Закрыть вкладку"><svg width="10" height="10"><use href="#i-close"/></svg></button>
            </div>
            <div class="doc-scroll">
              <button aria-label="Назад"><svg width="8" height="8"><path d="M6 1v6L2 4z" fill="none" stroke="#667"/></svg></button>
              <button aria-label="Вперёд"><svg width="8" height="8"><path d="M2 1v6l4-3z" fill="none" stroke="#667"/></svg></button>
            </div>
          </div>
        </main>
      </div>

      <div class="statusbar"><span>0.0000</span><span>NUM</span><svg width="8" height="8"><path d="M6 0h1v1H6zM3 3h1v1H3zM6 3h1v1H6zM0 6h1v1H0zM3 6h1v1H3zM6 6h1v1H6z" fill="#d4e8ee"/></svg></div>
    </div>

    <div class="behind-right">
      <div class="behind-bar"><svg width="9" height="14" viewBox="0 0 9 14"><path d="M0 1a6 6 0 0 1 0 12z" fill="#2a3f9c"/><path d="M0 4c4-1 3 3 1 4M1 10v1" fill="none" stroke="#fff"/></svg></div>
      <svg width="10" height="10"><use href="#i-close"/></svg>
    </div>

    <!-- Windows taskbar -->
    <footer class="taskbar">
      <div class="pinned">
        <button aria-label="Пуск"><svg width="15" height="15"><path d="M0 2l6-1v6H0zM7 1l8-1v7H7zM0 8h6v6l-6-1zM7 8h8v7l-8-1z" fill="#fff"/></svg></button>
        <button aria-label="Поиск"><svg width="16" height="16"><circle cx="10" cy="6" r="5" fill="none" stroke="#fff" stroke-width="1.500"/><path d="M6 10l-5 5" stroke="#fff" stroke-width="1.500"/></svg></button>
        <button class="open" aria-label="Проводник"><svg width="20" height="18"><path d="M0 1h7l2 2h11v14H0z" fill="#f6c644"/><path d="M0 5h20v5H0z" fill="#ffe08a"/><path d="M3 10h14v7h-4v-3H7v3H3z" fill="#3a94dc"/></svg></button>
        <button class="open" aria-label="Outlook"><svg width="24" height="22"><path d="M7 0h13v14H7z" fill="#1f8fe0"/><path d="M13 4h7v8h-7z" fill="#50c0f4"/><path d="M0 4h11v11H0z" fill="#0f62b4"/><circle cx="5.500" cy="9.500" r="3" fill="none" stroke="#fff" stroke-width="1.500"/><path d="M10 12h14v10H10z" fill="#f6cf96"/><path d="M10 12l7 6 7-6" fill="none" stroke="#b8762c"/></svg></button>
        <button aria-label="Total Commander"><svg width="21" height="21"><path d="M0 0h21v21H1z" fill="#2437b4"/><path d="M5 0h11v7H5z" fill="#c9d0ee"/><path d="M10 1h3v5h-3z" fill="#2437b4"/><path d="M3 9h15v12H3z" fill="#fff"/><path d="M4 12h13M4 15h13" stroke="#e08a8a"/></svg></button>
        <button class="open" aria-label="Teams"><svg width="23" height="22"><circle cx="12" cy="4" r="3.500" fill="#7b83eb"/><circle cx="19" cy="5" r="2.500" fill="#5059c9"/><path d="M7 8h15v8c0 4-4 5-7 5s-8-2-8-6z" fill="#6a70d8"/><path d="M0 5h11v11H0z" fill="#4b53bc"/><path d="M3 8h6M6 8v6" stroke="#fff" stroke-width="2"/><circle cx="18" cy="17" r="4.500" fill="#c4314b"/><path d="M15 17h6" stroke="#fff" stroke-width="1.500"/></svg></button>
        <button class="open" aria-label="Chrome"><svg width="20" height="20" viewBox="0 0 20 20"><circle cx="10" cy="10" r="10" fill="#f9c928"/><path d="M10 10L1.300 5A10 10 0 0 1 18.700 5z" fill="#e33b2e"/><path d="M10 10L1.300 5A10 10 0 0 0 9 20l5-8z" fill="#2da44e"/><circle cx="10" cy="10" r="4.700" fill="#fff"/><circle cx="10" cy="10" r="3.700" fill="#3b7ded"/></svg></button>
        <button class="open" aria-label="PowerPoint"><svg width="22" height="20"><circle cx="12" cy="10" r="9.500" fill="#e0583a"/><path d="M12 0a10 10 0 0 1 10 10H12z" fill="#f59a7c"/><path d="M0 5h11v11H0z" fill="#c03a1c"/><path d="M4 14V7h2a2 2 0 0 1 0 4.500H4" fill="none" stroke="#fff" stroke-width="1.500"/></svg></button>
        <button class="open" aria-label="Word"><svg width="22" height="20"><path d="M6 1h15v18H6z" fill="#2b7cd3"/><path d="M6 1h15v5H6z" fill="#41a5ee"/><path d="M6 14h15v5H6z" fill="#103f91"/><path d="M0 5h11v11H0z" fill="#185abd"/><path d="M2 7l2 7 1.500-6L7 14l2-7" fill="none" stroke="#fff" stroke-width="1.300"/></svg></button>
        <button class="open" aria-label="Edge"><svg width="22" height="22" viewBox="0 0 22 22"><circle cx="11" cy="11" r="10.500" fill="#1a86d8"/><path d="M1 9C3-3 21-2 21.500 10c0 5-6 5-8 3 2-3-1-6-4-6S2 9 1 13z" fill="#3cc8a0"/><path d="M9 8c-5 2-4 11 3 13 4 .5 6-1 8-4-5 3-12 0-11-9z" fill="#12509c"/></svg></button>
        <button class="open" aria-label="Калькулятор"><svg width="17" height="21"><path d="M0 0h17v21H0z" fill="#8c969c"/><path d="M1 1h15v4H1z" fill="#3cb4dc"/><path d="M2 7h3v3H2zM7 7h3v3H7zM12 7h3v3h-3zM2 12h3v3H2zM7 12h3v3H7zM2 17h3v3H2zM7 17h3v3H7z" fill="#eef2f4"/><path d="M12 12h3v8h-3z" fill="#1c4a84"/></svg></button>
        <button class="open current" aria-label="Plant Simulation"><svg width="22" height="20"><circle cx="9" cy="11" r="8" fill="#2aa8e0"/><path d="M3 1l10-1 1 6-6 3z" fill="#f07a4c"/><path d="M4 7l6 8 5-13" fill="none" stroke="#dff4fc" stroke-width="2"/><ellipse cx="11" cy="12" rx="10" ry="4" fill="none" stroke="#e8b83c" stroke-width="2" transform="rotate(-35 11 12)"/></svg></button>
      </div>
      <div class="tray">
        <svg width="20" height="18"><circle cx="9" cy="7" r="7" fill="#f8b62c"/><path d="M4 18a4 4 0 0 1 0-8 6 6 0 0 1 11 0 4 4 0 0 1 1 8z" fill="#e6eefa"/></svg>
        <span class="weather">18°C&nbsp; Неб. облачность</span>
        <svg width="12" height="8"><path d="M1 7l5-5 5 5" fill="none" stroke="#fff" stroke-width="1.500"/></svg>
        <svg width="10" height="15"><rect x="2" y="0" width="6" height="10" rx="2" fill="#fff"/><path d="M1 8c0 5 8 5 8 0M5 11v4" fill="none" stroke="#fff"/></svg>
        <svg width="14" height="14"><path d="M0 0h14v14H0z" fill="#e0641e"/><path d="M8 2c-4 3 2 3-1 6M4 9h6M4 11h6" fill="none" stroke="#fff"/></svg>
        <svg width="15" height="12"><path d="M5 4h8v6H5zM14 6v2" fill="#fff" stroke="#fff"/><path d="M2 1v3M5 1v3M1 4h5M3 4v4" stroke="#fff"/></svg>
        <svg width="13" height="13"><path d="M1 12A11 11 0 0 1 12 1M4 12a8 8 0 0 1 8-8M7 12a5 5 0 0 1 5-5" fill="none" stroke="#ccd"/><circle cx="11" cy="11" r="1.500" fill="#fff"/></svg>
        <svg width="16" height="12"><path d="M1 4h2l3-3v10L3 8H1zM8 4c1 1 1 3 0 4M10 2c3 2 3 6 0 8M13 1c3 3 3 7 0 10" fill="none" stroke="#fff"/></svg>
        <span class="lang">РУС</span>
        <span class="clock">12:39<br>30.08.2021</span>
        <svg width="16" height="16"><path d="M0 0h15v11H9l-4 4v-4H0z" fill="#fff"/><path d="M2 3h11M2 6h11M2 8h7" stroke="#1b2a30"/><circle cx="12" cy="12" r="3.500" fill="#1b2a30" stroke="#fff"/></svg>
      </div>
    </footer>
  </div>

  <!-- Call participants -->
  <div class="participants">
    <div class="person"><div class="avatar pink">РА</div><span>Родичев Всеволод Анатольевич</span></div>
    <div class="person"><div class="avatar aqua">БК</div><span>Безденежных Иван Константинов...</span></div>
    <div class="person"><div class="avatar sand">ЗН</div><span>Зимин Алексей Николаевич</span></div>
    <div class="person"><div class="avatar sand">ЖИ</div><span>Жарков Валерий Игоревич</span></div>
    <div class="person"><div class="avatar plum">АВ</div><span>Anton Buyandukov</span></div>
  </div>

</body>
</html>
```
FILE: styles.css
```css
* {
  box-sizing: border-box;
}

body {
  margin: 0;
  min-height: 100vh;
  display: flex;
  flex-direction: column;
  background: #000;
  color: #222;
  font-family: "Open Sans", "Noto Sans", sans-serif;
  font-size: 10px;
  line-height: 14px;
}

button {
  margin: 0;
  padding: 0;
  border: 0;
  background: none;
  color: inherit;
  font: inherit;
  display: flex;
  align-items: center;
  justify-content: center;
  white-space: nowrap;
}

input {
  font: inherit;
  color: inherit;
}

svg {
  display: block;
  flex: none;
}

.defs {
  position: absolute;
}

/* Shared desktop */
.screen {
  flex: 1;
  margin: 0 5%;
  display: grid;
  grid-template-columns: 5px 1fr 12px;
  grid-template-rows: 1fr 34px;
  background: #fff;
}

.behind-left {
  background: linear-gradient(#d4e4ea 23px, #00647f 23px, #00647f 46px, #e2ecf0 46px);
  border-right: 1px solid #9dbcc8;
}

.behind-right {
  display: flex;
  flex-direction: column;
  padding-top: 28px;
  gap: 78px;
  color: #555;
  background: linear-gradient(#fff 135px, #ececec 135px, #f2f2f2 155px, #fff 155px, #f6f2f6);
}

.behind-bar {
  height: 30px;
  padding-top: 1px;
  background: #4f9db8;
}

.app {
  border-top: 4px solid #b4cfda;
  border-right: 2px solid #8fbccb;
  border-left: 1px solid #fff;
  border-bottom: 2px solid #fff;
  display: grid;
  grid-template-rows: 24px 24px 84px 1fr 17px;
  min-width: 0;
  background: #fff;
}

/* Title bar */
.titlebar {
  display: flex;
  align-items: center;
  padding-right: 5px;
}

.quick {
  width: 316px;
  padding-left: 4px;
  display: flex;
  align-items: center;
  gap: 2px;
}

.quick button {
  width: 18px;
  height: 18px;
}

.quick-more {
  margin-left: 2px;
}

.tx {
  width: 28px;
  color: #7f9199;
  font-family: "Liberation Sans", sans-serif;
  font-size: 17px;
}

.on {
  background: #b0d6e1;
}

.context-tab {
  width: 248px;
  height: 24px;
  border: 1px solid #7db6bb;
  border-top: 4px solid #44a37f;
  border-bottom: 0;
  text-align: center;
  line-height: 18px;
}

.window-title {
  flex: 1;
  text-align: center;
}

.siemens {
  width: 72px;
  color: #0a9090;
  font-size: 16px;
}

.window-buttons {
  display: flex;
  gap: 23px;
  padding: 0 6px 0 14px;
}

/* Ribbon tabs */
.tabs {
  display: flex;
  background: #539fb8;
  color: #fff;
}

.tabs > button {
  padding: 2px 13px 0;
}

.tabs .file {
  width: 62px;
  margin-right: 1px;
  background: #006487;
}

.tabs .active {
  width: 128px;
  background: #fff;
  color: #4a8fb0;
}

.search {
  width: 179px;
  margin: 3px 0 1px 14px;
  padding: 0 5px;
  display: flex;
  align-items: center;
  gap: 8px;
  background: #fff;
  color: #666;
}

.search input {
  width: 140px;
  border: 0;
  background: none;
}

.search input::placeholder {
  color: #666;
}

.tabs-right {
  margin-left: auto;
  padding-right: 5px;
  display: flex;
  gap: 8px;
}

/* Ribbon */
.ribbon {
  display: flex;
  line-height: 12px;
  padding: 4px 0;
}

.group {
  border-right: 1px solid #c4c4c4;
  display: flex;
  flex-direction: column;
  justify-content: space-between;
}

.group h3 {
  margin: 0;
  color: #4a97bd;
  font-size: 10px;
  font-weight: normal;
  line-height: 14px;
  text-align: center;
}

.tools {
  display: grid;
  height: 60px;
}

.big {
  flex-direction: column;
  justify-content: flex-start;
  padding-top: 3px;
}

.big svg {
  height: 30px;
  margin-bottom: 2px;
}

.off svg {
  opacity: .8;
}

small {
  font-size: 8px;
  color: #999;
}

.events {
  width: 206px;
}

.events .tools {
  grid-template-columns: 58px 1fr;
}

.controller {
  min-width: 0;
  border-left: 1px solid #ddd;
  margin: 4px 0;
  padding: 4px 4px 0 6px;
}

.controller .row {
  display: flex;
  align-items: center;
  gap: 2px;
  height: 22px;
}

.controller .row button {
  width: 20px;
  height: 20px;
}

.controller .bug {
  margin-left: 2px;
  border-left: 1px solid #ccc;
}

.controller .speed {
  height: 32px;
  padding-left: 3px;
  gap: 7px;
  font-size: 14px;
}

input[type="range"] {
  appearance: none;
  width: 84px;
  height: 14px;
  margin: 0;
  background: linear-gradient(#bbb, #bbb) center / 100% 1px no-repeat;
}

input[type="range"]::-webkit-slider-thumb {
  appearance: none;
  width: 5px;
  height: 14px;
  border: 1px solid #999;
  background: #fff;
}

.animation {
  width: 61px;
}

.animation .tools {
  padding: 0 11px;
}

.navigation {
  width: 230px;
}

.navigation .tools {
  grid-template-columns: 93px 46px 46px 38px;
}

.edit {
  width: 355px;
}

.edit .tools {
  grid-template-columns: 50px 79px 108px 50px 62px;
}

.objects {
  width: 563px;
}

.objects .tools {
  grid-template-columns: 54px 168px 58px 74px 66px 65px 74px;
}

.model {
  width: 198px;
}

.model .tools {
  grid-template-columns: 98px 90px;
}

.list {
  display: flex;
  flex-direction: column;
  border-right: 1px solid #ccc;
}

.list button {
  height: 20px;
  justify-content: flex-start;
  gap: 3px;
}

.split button {
  padding-left: 8px;
}

.rule {
  box-shadow: -1px 0 #ddd;
}

/* Work area */
.workspace {
  display: grid;
  grid-template-columns: 181px 5px 1fr;
  grid-template-rows: 1fr;
  min-height: 0;
  background: #dedede;
}

.side {
  display: grid;
  grid-template-rows: 20px 1fr 25px 26px 111px;
}

.content {
  grid-column: 3;
  min-width: 0;
  display: flex;
  flex-direction: column;
  background: #fff;
}

.caption {
  height: 20px;
  padding: 0 5px 0 4px;
  display: flex;
  align-items: center;
  justify-content: space-between;
  background: #ededed;
}

.side .caption {
  height: auto;
}

.caption-icons {
  display: flex;
  align-items: center;
  gap: 7px;
  color: #555;
}

.tree {
  margin: 0;
  padding: 1px 0 0 3px;
  border: 1px solid #aaa;
  background: #fff;
  list-style: none;
  line-height: 16px;
}

.tree li {
  height: 16px;
  display: flex;
  align-items: center;
  gap: 6px;
  padding-left: 3px;
}

.tree .root {
  padding: 0;
  gap: 5px;
}

.tree .leaf {
  padding-left: 33px;
  gap: 5px;
}

.plus {
  width: 9px;
  height: 9px;
  margin-right: 1px;
  border: 1px solid #a0a8b8;
  border-radius: 2px;
  background:
    linear-gradient(#446, #446) center / 5px 1px no-repeat,
    linear-gradient(#446, #446) center / 1px 5px no-repeat,
    #fff;
}

.minus {
  background: linear-gradient(#446, #446) center / 5px 1px no-repeat, #fff;
}

.selected {
  background: #eee;
  padding-right: 2px;
}

.fav-bar {
  padding: 2px 3px;
  display: flex;
  gap: 3px;
  background: #fff;
}

.fav-bar button {
  border: 1px solid #bbb;
}

.fav-bar .add {
  flex: 1;
  gap: 12px;
  background: #e8edf1;
}

.fav-bar .remove {
  width: 22px;
}

.fav-list {
  border: 1px solid #aaa;
  background: repeating-linear-gradient(#fff 0, #fff 16px, #f2f2f2 16px, #f2f2f2 17px);
}

/* Toolbox */
.toolbox-tabs {
  display: flex;
  height: 20px;
  padding-top: 2px;
}

.toolbox-tabs button {
  padding: 0 6px;
  border-bottom: 1px solid #bbb;
}

.toolbox-tabs .active {
  padding: 0 5px 0 4px;
  color: #4a97bd;
  border: 1px solid #bbb;
  border-bottom: 0;
  border-left: 0;
}

.toolbox-tabs::after {
  content: "";
  flex: 1;
  border-bottom: 1px solid #bbb;
}

.toolbox {
  height: 38px;
  display: flex;
  justify-content: space-between;
  padding-right: 3px;
}

.toolbox-items {
  width: 844px;
  height: 34px;
  display: grid;
  grid-template-columns: repeat(24, 1fr);
}

.toolbox .on {
  background: #cce6fb;
}

.more {
  width: 12px;
  background: #f0f0f0;
}

/* Document area */
.mdi {
  flex: 1;
  min-height: 0;
  display: flex;
  margin-right: 7px;
  padding: 7px 7px 2px 10px;
  border-top: 11px solid #e0e0e0;
  border-left: 5px solid #e8e8e8;
  box-shadow: inset 1px 1px #888, 7px 0 #ececec;
}

.frame-window {
  position: relative;
  flex: 1;
  display: flex;
  flex-direction: column;
  padding: 0 7px 7px 8px;
  background: #539fb8;
}

.frame-title {
  height: 28px;
  padding: 4px 11px 0 1px;
  display: flex;
  align-items: center;
  gap: 8px;
  color: #fff;
}

.frame-buttons {
  display: flex;
  gap: 23px;
  margin-left: auto;
}

.canvas {
  flex: 1;
  min-height: 0;
  overflow: hidden;
  background: #fff;
  border-top: 1px solid #777;
  border-left: 1px solid #777;
}

.name {
  font-size: 16px;
  fill: #333;
}

.wire {
  fill: none;
  stroke: #7482b8;
}

.wire-label {
  font-size: 16px;
  fill: #5461ac;
}

/* Event controller dialog */
.dialog {
  position: absolute;
  top: 24px;
  right: 31px;
  width: 249px;
  padding-bottom: 11px;
  border: 1px solid #aab4b8;
  background: #fff;
}

.dialog-title {
  height: 21px;
  padding: 0 8px 0 7px;
  display: flex;
  align-items: center;
  gap: 9px;
  background: #cfd9df;
}

.dialog-title span {
  flex: 1;
}

.dialog-title button {
  width: 16px;
  margin-left: 8px;
  font-weight: bold;
}

.dialog-menu {
  margin: 0 3px;
  padding-left: 12px;
  height: 21px;
  display: flex;
  align-items: center;
  gap: 13px;
  border-bottom: 1px solid #999;
}

.dialog-menu a {
  color: inherit;
  text-decoration: none;
}

.time {
  height: 30px;
  margin: 7px 16px 8px 7px;
  padding: 4px 5px;
  display: flex;
  align-items: center;
  justify-content: space-between;
  border: 1px solid #bbb;
  border-radius: 3px;
}

.dialog button {
  cursor: default;
}

.time button,
.run button,
.dialog-actions button {
  border: 1px solid #b4b8bc;
  background: #e9edf1;
}

.time button {
  width: 44px;
  height: 20px;
}

.dialog input[type="text"] {
  height: 18px;
  border: 1px solid #aaa;
  padding: 0 5px;
}

.time input[type="text"] {
  width: 161px;
  text-align: right;
}

.dialog-tabs {
  height: 17px;
  margin: 0 16px 0 7px;
  display: flex;
}

.dialog-tabs button {
  padding: 0 6px;
  border-bottom: 1px solid #aaa;
}

.dialog-tabs .active {
  width: 125px;
  padding: 0;
  color: #4a8fb0;
  border: 1px solid #aaa;
  border-bottom: 0;
}

.dialog-tabs svg {
  flex: 1;
  height: 17px;
  border-bottom: 1px solid #aaa;
}

.dialog-panel {
  height: 123px;
  margin: 0 16px 11px 7px;
  padding: 8px 33px 0 29px;
  border: 1px solid #aaa;
  border-top: 0;
}

.run {
  display: flex;
  gap: 3px;
}

.run button {
  width: 30px;
  height: 21px;
}

.ends {
  display: flex;
  justify-content: space-between;
  padding-top: 14px;
}

.ticks {
  height: 4px;
  margin: 5px 4px 0 8px;
  background: repeating-linear-gradient(90deg, #aaa 0, #aaa 1px, transparent 1px, transparent 14px);
}

.dialog-panel input[type="range"] {
  display: block;
  width: 156px;
  margin-bottom: 11px;
}

.real {
  display: flex;
  align-items: center;
  gap: 12px;
}

.real label {
  display: flex;
  align-items: center;
  gap: 2px;
}

.real input[type="checkbox"] {
  appearance: none;
  width: 10px;
  height: 10px;
  margin: 0 0 0 3px;
  border: 1px solid #999;
}

.real input[type="checkbox"]:checked::before {
  content: "";
  display: block;
  width: 3px;
  height: 5px;
  margin: 0 auto;
  border: solid #666;
  border-width: 0 1px 1px 0;
  transform: rotate(45deg);
}

.real input[type="text"] {
  width: 40px;
}

.dialog-actions {
  display: flex;
  gap: 5px;
  padding-left: 14px;
}

.dialog-actions button {
  width: 68px;
  height: 21px;
}

.dialog-actions .primary {
  border-color: #6cb0c4;
  background: #6cb0c4;
  color: #fff;
}

/* Document tabs */
.doc-tabs {
  position: relative;
  height: 27px;
  margin-top: 12px;
  padding: 1px 6px;
  display: flex;
  align-items: center;
  justify-content: space-between;
  border-top: 1px solid #bbb;
}

.notch {
  position: absolute;
  top: -1px;
  left: 56px;
}

.doc-tab {
  height: 20px;
  width: 112px;
  align-self: flex-end;
  padding: 0 3px 1px 2px;
  display: flex;
  align-items: center;
  gap: 2px;
  border-bottom: 2px solid #2f9a72;
}

.doc-tab b {
  color: #4a93ac;
}

.doc-tab button {
  margin-left: auto;
}

.doc-scroll {
  display: flex;
  gap: 3px;
}

.doc-scroll button {
  width: 13px;
  height: 13px;
  background: #b5d3dc;
}

.statusbar {
  display: flex;
  align-items: center;
  justify-content: flex-end;
  background: #539fb8;
  color: #fff;
}

.statusbar span {
  width: 208px;
}

.statusbar span + span {
  width: 60px;
}

/* Taskbar */
.taskbar {
  grid-column: 1 / 4;
  display: flex;
  justify-content: space-between;
  background: #1b2b31;
  color: #fff;
}

.pinned {
  display: flex;
}

.pinned button {
  width: 44px;
  border-left: 4px solid #1b2b31;
  border-right: 4px solid #1b2b31;
}

.pinned .open {
  border-bottom: 2px solid #76acd8;
}

.pinned .current {
  border-left: 0;
  border-right: 0;
  background: #47555b;
}

.tray {
  display: flex;
  align-items: center;
  gap: 8px;
  padding-right: 22px;
  font-size: 11px;
}

.weather {
  width: 142px;
  font-size: 12px;
  white-space: nowrap;
}

.clock {
  width: 56px;
  text-align: center;
  font-size: 10px;
  line-height: 16px;
}

.lang {
  width: 26px;
}

/* Participants */
.participants {
  height: 108px;
  display: flex;
  justify-content: flex-end;
}

.person {
  width: 200px;
  padding: 24px 12px 0;
  background: #1b1b1b;
  color: #eee;
  font-size: 11px;
  white-space: nowrap;
}

.person:first-child {
  background: #262626;
}

.person:nth-child(3) {
  background: #1f1f1f;
}

.person:last-child {
  background: #161616;
}

.avatar {
  width: 60px;
  height: 60px;
  margin: 0 auto 5px;
  border-radius: 50%;
  font-size: 24px;
  font-weight: 600;
  line-height: 60px;
  text-align: center;
}

.pink {
  background: #f0d5cd;
  color: #75260f;
}

.aqua {
  background: #d9eef0;
  color: #285f66;
}

.sand {
  background: #faedc8;
  color: #7c5f06;
}

.plum {
  background: #e9d0e2;
  color: #632146;
}
```
